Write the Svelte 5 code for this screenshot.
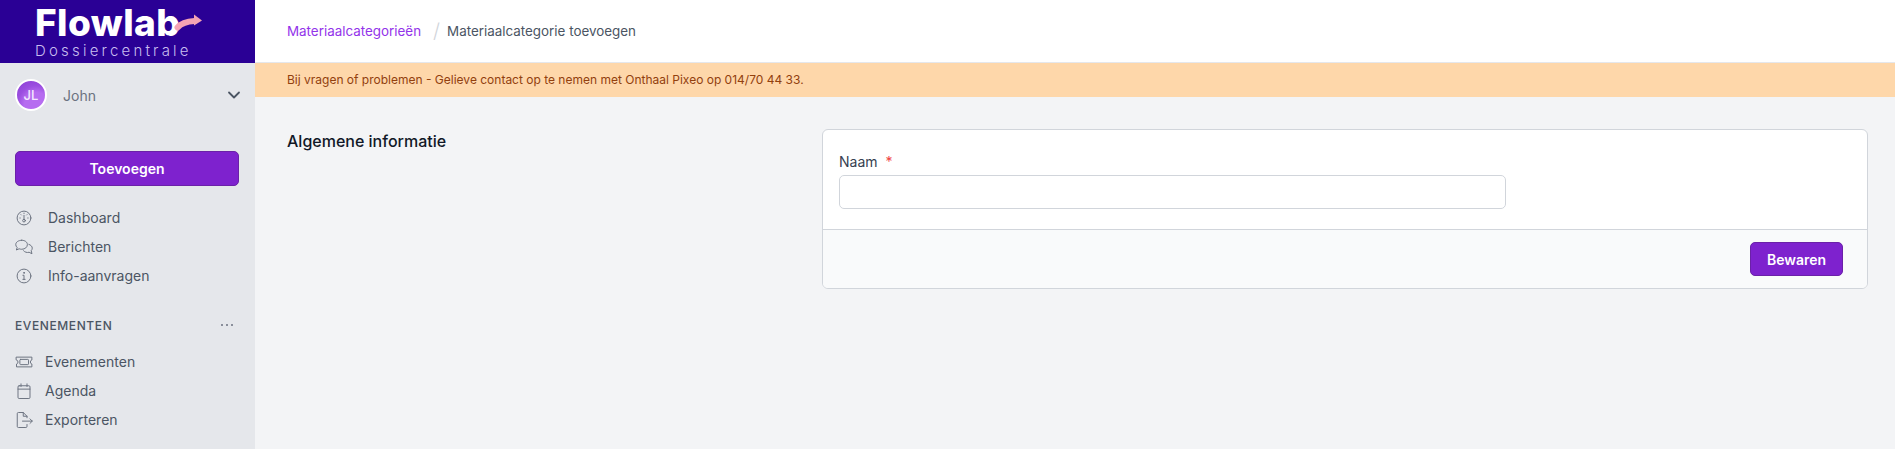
<script>
    const mainLinks = [
        { label: 'Dashboard', icon: 'dashboard' },
        { label: 'Berichten', icon: 'chat' },
        { label: 'Info-aanvragen', icon: 'info' }
    ];

    const eventLinks = [
        { label: 'Evenementen', icon: 'ticket' },
        { label: 'Agenda', icon: 'calendar' },
        { label: 'Exporteren', icon: 'export' }
    ];
</script>

{#snippet icon(name)}
    <svg class="nav-icon" viewBox="0 0 24 24" fill="none" stroke="currentColor" stroke-width="1.3" stroke-linecap="round" stroke-linejoin="round">
        {#if name === 'dashboard'}
            <circle cx="12" cy="12" r="9.200" />
            <path d="M12 8.500v5" />
            <circle cx="12" cy="15.500" r="1.800" />
            <path d="M6.500 12h.5M17 12h.5M8 7.500l.5.5M16 7.500l-.5.5M12 5.500v.5" />
        {:else if name === 'chat'}
            <path d="M9 3C4.600 3 1 5.500 1 8.800c0 1.500.7 2.800 1.900 3.900L1.800 16l3.700-1.600c1.100.4 2.300.6 3.500.6 4.400 0 7.500-2.800 7.500-6.200S13.400 3 9 3z" />
            <path d="M18.500 8.500c2.600.8 4.500 2.700 4.500 5 0 1.300-.5 2.400-1.400 3.300l1 4.200-3.800-2c-2.800.8-5.800 0-7.400-2" />
        {:else if name === 'info'}
            <circle cx="12" cy="12" r="9.200" />
            <path d="M10.500 11H12v5.500M10.500 16.500h3" />
            <circle cx="12" cy="7.800" r=".6" fill="currentColor" />
        {:else if name === 'ticket'}
            <path d="M2 5.500h20.500v3.800a2.800 2.800 0 0 0 0 5.400v3.800H2v-3.800a2.800 2.800 0 0 0 0-5.400z" />
            <rect x="6.500" y="8.500" width="11.500" height="7" rx="1" />
        {:else if name === 'calendar'}
            <rect x="4" y="5" width="16" height="17" rx="1.500" />
            <path d="M4 9.500h16M8 2.500V6M16 2.500V6" />
        {:else}
            <path d="M16 9V7l-5-5H4.500A1.500 1.500 0 0 0 3 3.500v17A1.500 1.500 0 0 0 4.500 22h10a1.500 1.500 0 0 0 1.500-1.500V18" />
            <path d="M11 2v5h5M10 13.500h13M20 10.500l3 3-3 3" />
        {/if}
    </svg>
{/snippet}

<div class="page">
    <aside class="sidebar">
        <div class="logo">
            <span class="logo-name">Flowlab</span>
            <span class="logo-sub">Dossiercentrale</span>
            <svg class="logo-arrow" viewBox="0 0 28 20">
                <path d="M3.500 15.500c3-3.500 8-6 17-6.500" fill="none" stroke="#f4a3b4" stroke-width="6" stroke-linecap="round" />
                <path d="M20 2.500l8 6-8 5z" fill="#f4a3b4" />
            </svg>
        </div>

        <div class="user">
            <span class="avatar">JL</span>
            <span class="user-name">John</span>
            <svg class="chevron" viewBox="0 0 20 20" fill="none" stroke="currentColor" stroke-width="1.800" stroke-linecap="round" stroke-linejoin="round">
                <path d="M5 7.500l5 5 5-5" />
            </svg>
        </div>

        <button class="add-button">Toevoegen</button>

        <nav class="nav">
            {#each mainLinks as link}
                <div class="nav-item">
                    {@render icon(link.icon)}
                    <span class="nav-label">{link.label}</span>
                </div>
            {/each}
        </nav>

        <div class="section-head">
            <span>Evenementen</span>
            <span class="dots">
                <i></i><i></i><i></i>
            </span>
        </div>

        <nav class="nav nav-events">
            {#each eventLinks as link}
                <div class="nav-item">
                    {@render icon(link.icon)}
                    <span class="nav-label">{link.label}</span>
                </div>
            {/each}
        </nav>
    </aside>

    <div class="main">
        <header class="topbar">
            <a class="crumb-link" href="#top">Materiaalcategorieën</a>
            <span class="crumb-sep">/</span>
            <span class="crumb-current">Materiaalcategorie toevoegen</span>
        </header>

        <div class="notice">Bij vragen of problemen - Gelieve contact op te nemen met Onthaal Pixeo op 014/70 44 33.</div>

        <section class="content">
            <h2>Algemene informatie</h2>
            <div class="card">
                <div class="card-body">
                    <label for="naam">Naam <span class="required">*</span></label>
                    <input id="naam" type="text" />
                </div>
                <div class="card-footer">
                    <button class="save-button">Bewaren</button>
                </div>
            </div>
        </section>
    </div>
</div>

<style>
    :global(body) {
        margin: 0;
        font-family: Inter, "Liberation Sans", sans-serif;
        background: #f3f4f6;
    }

    .page {
        display: flex;
        height: 449px;
        overflow: hidden;
    }

    .sidebar {
        width: 255px;
        flex-shrink: 0;
        background: #e5e7eb;
        display: flex;
        flex-direction: column;
    }

    .logo {
        position: relative;
        height: 63px;
        box-sizing: border-box;
        background: #2a0095;
        padding-left: 35px;
        color: #fff;
    }

    .logo-name {
        display: block;
        font-size: 37px;
        font-weight: 800;
        line-height: 45px;
        letter-spacing: 0.4px;
    }

    .logo-sub {
        display: block;
        font-size: 15px;
        font-weight: 300;
        line-height: 11px;
        letter-spacing: 3.2px;
        color: #c8bdf0;
    }

    .logo-arrow {
        position: absolute;
        left: 174px;
        top: 12px;
        width: 28px;
        height: 20px;
    }

    .user {
        display: flex;
        align-items: center;
        height: 32px;
        margin-top: 16px;
        padding: 0 11px 0 15px;
        color: #6b7280;
        font-size: 14px;
    }

    .avatar {
        width: 28px;
        height: 28px;
        border: 2px solid #fff;
        border-radius: 50%;
        background: radial-gradient(circle at 70% 85%, #b66cf0 0 40%, #9b4fe0 62%, #8a3bd4 100%);
        color: #f3e8ff;
        font-size: 13px;
        font-weight: 500;
        display: flex;
        align-items: center;
        justify-content: center;
    }

    .user-name {
        margin-left: 16px;
        flex: 1;
    }

    .chevron {
        width: 20px;
        height: 20px;
        color: #4b5563;
    }

    .add-button {
        margin: 40px 16px 0 15px;
        height: 35px;
        border: 1px solid #6b21a8;
        border-radius: 5px;
        background: #7e22ce;
        color: #fff;
        font: 600 14px Inter, sans-serif;
    }

    .nav {
        display: flex;
        flex-direction: column;
        margin-top: 17px;
    }

    .nav-item {
        display: flex;
        align-items: center;
        height: 29px;
        padding-left: 15px;
        color: #4b5563;
        font-size: 14px;
    }

    .nav-icon {
        width: 18px;
        height: 18px;
        flex-shrink: 0;
        color: #6b7280;
    }

    .nav-label {
        margin-left: 15px;
    }

    .nav-events .nav-label {
        margin-left: 12px;
    }

    .section-head {
        display: flex;
        align-items: center;
        justify-content: space-between;
        margin-top: 26px;
        padding: 0 22px 0 15px;
        height: 18px;
        color: #4b5563;
        font-size: 12px;
        font-weight: 500;
        letter-spacing: 0.6px;
        text-transform: uppercase;
    }

    .dots {
        display: flex;
        gap: 3px;
    }

    .dots i {
        width: 2px;
        height: 2px;
        border-radius: 50%;
        background: #6b7280;
    }

    .nav-events {
        margin-top: 13px;
    }

    .main {
        flex: 1;
        min-width: 0;
        display: flex;
        flex-direction: column;
    }

    .topbar {
        height: 63px;
        flex-shrink: 0;
        box-sizing: border-box;
        background: #fff;
        padding: 0 32px;
        display: flex;
        align-items: center;
        font-size: 13.400px;
        border-bottom: 1px solid #e5e7eb;
    }

    .crumb-link {
        color: #9333ea;
        text-decoration: none;
    }

    .crumb-sep {
        margin: 0 7px 0 12px;
        color: #d1d5db;
        font-size: 20px;
        font-weight: 300;
    }

    .crumb-current {
        color: #4b5563;
    }

    .notice {
        height: 34px;
        flex-shrink: 0;
        box-sizing: border-box;
        padding: 0 32px;
        background: #fed7aa;
        color: #92400e;
        font-size: 12px;
        line-height: 34px;
    }

    .content {
        display: grid;
        grid-template-columns: repeat(3, 1fr);
        gap: 24px;
        padding: 32px 27px 0 32px;
    }

    h2 {
        margin: 0;
        font-size: 16px;
        font-weight: 450;
        line-height: 24px;
        color: #111827;
    }

    .card {
        grid-column: span 2;
        border: 1px solid #d1d5db;
        border-radius: 6px;
        background: #fff;
        overflow: hidden;
    }

    .card-body {
        height: 100px;
        box-sizing: border-box;
        padding: 22px 16px 0;
        border-bottom: 1px solid #d1d5db;
    }

    label {
        display: block;
        height: 23px;
        font-size: 14px;
        font-weight: 400;
        line-height: 20px;
        color: #374151;
    }

    .required {
        margin-left: 4px;
        color: #ef4444;
    }

    input {
        display: block;
        width: 667px;
        height: 34px;
        box-sizing: border-box;
        border: 1px solid #d1d5db;
        border-radius: 5px;
        background: #fff;
    }

    .card-footer {
        height: 58px;
        box-sizing: border-box;
        padding: 12px 24px 0 0;
        background: #f9fafb;
        display: flex;
        justify-content: flex-end;
    }

    .save-button {
        width: 93px;
        height: 34px;
        border: 1px solid #6b21a8;
        border-radius: 5px;
        background: #7e22ce;
        color: #fff;
        font: 600 14px Inter, sans-serif;
    }
</style>
